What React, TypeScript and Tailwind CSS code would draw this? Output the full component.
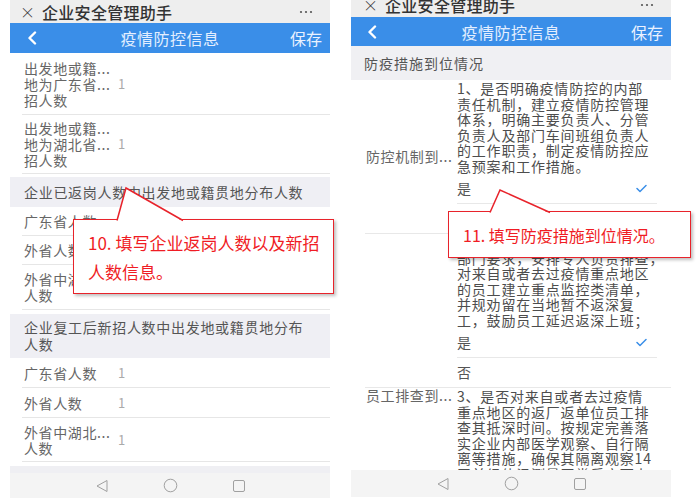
import React from "react";

const ROW = "text-[14px] leading-[16px] tracking-[0.6px] text-[#666]";

function NavIcons() {
  return (
    <div className="flex items-center justify-center gap-[54px]">
      <svg width="14" height="14" viewBox="0 0 14 14">
        <polygon points="12,1.5 12,12.5 2,7" fill="none" stroke="#a0a0a0" strokeWidth="1" />
      </svg>
      <svg width="15" height="15" viewBox="0 0 15 15">
        <circle cx="7.5" cy="7.5" r="6.3" fill="none" stroke="#a0a0a0" strokeWidth="1" />
      </svg>
      <svg width="14" height="14" viewBox="0 0 14 14">
        <rect x="1.5" y="1.5" width="11" height="11" rx="1.5" fill="none" stroke="#a0a0a0" strokeWidth="1" />
      </svg>
    </div>
  );
}

function Chevron() {
  return (
    <svg width="10" height="14" viewBox="0 0 10 14">
      <polyline points="8,1.5 2.5,7 8,12.5" fill="none" stroke="#ffffff" strokeWidth="2.4" strokeLinecap="round" strokeLinejoin="round" />
    </svg>
  );
}

function Dots() {
  return (
    <svg width="14" height="4" viewBox="0 0 14 4">
      <circle cx="2" cy="2" r="1.1" fill="#555" />
      <circle cx="7" cy="2" r="1.1" fill="#555" />
      <circle cx="12" cy="2" r="1.1" fill="#555" />
    </svg>
  );
}

function Check() {
  return (
    <svg width="11" height="9" viewBox="0 0 11 9">
      <polyline points="1,4.5 4,7.5 10,1.5" fill="none" stroke="#3a8ee8" strokeWidth="1.5" strokeLinecap="round" strokeLinejoin="round" />
    </svg>
  );
}

function LeftRow({ lines, h, value = "1" }: { lines: string[]; h: string; value?: string }) {
  return (
    <div className={`ml-[12px] pl-[2px] border-b border-[#e6e6e6] flex items-center ${h}`}>
      <div className={`w-[94px] ${ROW}`}>
        {lines.map((l, i) => (
          <div key={i} className="whitespace-nowrap">{l}</div>
        ))}
      </div>
      <span className="text-[13px] text-[#aaa]">{value}</span>
    </div>
  );
}

const TXT = "text-[14px] leading-[15.5px] tracking-[0.8px] text-[#4d4d4d] whitespace-nowrap";
const LBL = "w-[92px] pl-[1px] text-[14px] leading-[15.5px] tracking-[0.6px] text-[#666] whitespace-nowrap";

function Options() {
  return (
    <>
      <div className="h-[30px] flex items-center justify-between pr-[10px] border-b border-[#e8e8e8]">
        <span className="text-[14px] text-[#555]">是</span>
        <Check />
      </div>
      <div className="h-[29px] flex items-center">
        <span className="text-[14px] text-[#555]">否</span>
      </div>
    </>
  );
}

function RightRow({ label, lines, align }: { label: string; lines: string[]; align: string }) {
  return (
    <div className={`ml-[14px] border-b border-[#e8e8e8] flex ${align}`}>
      <div className={LBL}>{label}</div>
      <div className="w-[200px] pt-[1px]">
        {lines.map((l, i) => (
          <div key={i} className={TXT}>{l}</div>
        ))}
        <Options />
      </div>
    </div>
  );
}

function TitleBar({ pl }: { pl: string }) {
  return (
    <div className={`h-full flex items-center ${pl} pr-[17px] text-[#333]`}>
      <span className="w-[22px] text-[15px] leading-none font-light">×</span>
      <span className="text-[16px] leading-none tracking-[0.3px] font-medium">企业安全管理助手</span>
      <span className="ml-auto flex items-center"><Dots /></span>
    </div>
  );
}

export default function App() {
  return (
    <div className="relative w-[700px] h-[500px] bg-white flex overflow-hidden font-['Noto_Sans_CJK_SC',sans-serif]">
      {/* Left phone */}
      <div className="ml-[10px] w-[320px] h-[498px] flex flex-col bg-white">
        <div className="h-[23px] shrink-0 bg-[#eeeeee]">
          <TitleBar pl="pl-[10px]" />
        </div>
        <div className="h-[30px] shrink-0 bg-[#3a8ee8] grid grid-cols-[1fr_auto_1fr] items-center">
          <div className="pl-[17px] flex items-center"><Chevron /></div>
          <span className="text-[16px] leading-none tracking-[0.5px] text-[#e3eeff]">疫情防控信息</span>
          <span className="justify-self-end pr-[8px] text-[16px] leading-none text-[#eaf2ff]">保存</span>
        </div>
        <div className="flex-1 overflow-hidden flex flex-col">
          <LeftRow h="h-[62px]" lines={["出发地或籍...", "地为广东省...", "招人数"]} />
          <LeftRow h="h-[59px]" lines={["出发地或籍...", "地为湖北省...", "招人数"]} />
          <div className="mt-[3px] h-[30px] shrink-0 bg-[#efeff4] flex items-center pl-[14px] text-[14px] tracking-[0.7px] text-[#555] whitespace-nowrap">
            企业已返岗人数中出发地或籍贯地分布人数
          </div>
          <LeftRow h="h-[29px]" lines={["广东省人数"]} />
          <LeftRow h="h-[29px]" lines={["外省人数"]} />
          <LeftRow h="h-[45px]" lines={["外省中湖北...", "人数"]} />
          <div className="mt-[4px] h-[44px] shrink-0 bg-[#efeff4] flex flex-col justify-center pl-[14px] text-[14px] leading-[17px] tracking-[0.7px] text-[#555] whitespace-nowrap">
            <span>企业复工后新招人数中出发地或籍贯地分布</span>
            <span>人数</span>
          </div>
          <LeftRow h="h-[30px]" lines={["广东省人数"]} />
          <LeftRow h="h-[30px]" lines={["外省人数"]} />
          <LeftRow h="h-[44px]" lines={["外省中湖北...", "人数"]} />
        </div>
        <div className="h-[7px] shrink-0 bg-[#efeff3]" />
        <div className="h-[25px] shrink-0 bg-[#f4f4f4] flex items-center justify-center">
          <NavIcons />
        </div>
      </div>

      {/* Right phone */}
      <div className="ml-[21px] w-[320px] h-[497px] flex flex-col bg-white">
        <div className="h-[17px] shrink-0 overflow-hidden bg-[#eeeeee]">
          <div className="-mt-[8px] h-[25px]">
            <TitleBar pl="pl-[12px]" />
          </div>
        </div>
        <div className="h-[29px] shrink-0 bg-[#3a8ee8] grid grid-cols-[1fr_auto_1fr] items-center">
          <div className="pl-[16px] flex items-center"><Chevron /></div>
          <span className="text-[16px] leading-none tracking-[0.5px] text-[#e3eeff]">疫情防控信息</span>
          <span className="justify-self-end pr-[8px] text-[16px] leading-none text-[#eaf2ff]">保存</span>
        </div>
        <div className="h-[34px] shrink-0 bg-[#f0f0f3] flex items-center pl-[13px] text-[14px] tracking-[1px] text-[#555]">
          防疫措施到位情况
        </div>
        <div className="flex-1 overflow-hidden">
          <RightRow
            align="items-center"
            label="防控机制到..."
            lines={[
              "1、是否明确疫情防控的内部",
              "责任机制，建立疫情防控管理",
              "体系，明确主要负责人、分管",
              "负责人及部门车间班组负责人",
              "的工作职责，制定疫情防控应",
              "急预案和工作措施。",
            ]}
          />
          <RightRow
            align="items-center"
            label=""
            lines={[
              "2、是否按照市、区及街道相关",
              "部门要求，安排专人负责排查，",
              "对来自或者去过疫情重点地区",
              "的员工建立重点监控类清单，",
              "并规劝留在当地暂不返深复",
              "工，鼓励员工延迟返深上班；",
            ]}
          />
          <RightRow
            align="items-start"
            label="员工排查到..."
            lines={[
              "3、是否对来自或者去过疫情",
              "重点地区的返厂返单位员工排",
              "查其抵深时间。按规定完善落",
              "实企业内部医学观察、自行隔",
              "离等措施，确保其隔离观察14",
              "天并经体温测量正常后方可上",
              "岗。",
            ]}
          />
        </div>
        <div className="h-[27px] shrink-0 bg-[#f4f4f4] flex items-center justify-center">
          <NavIcons />
        </div>
      </div>

      {/* Callout 10 */}
      <div className="absolute left-[73px] top-[219px] w-[261px] h-[75px] bg-white border-[1.5px] border-[#e8232b] shadow-[2px_2px_3px_rgba(0,0,0,0.25)] pl-[14px] pt-[8px] text-[#f01c24] text-[17px] leading-[29px] whitespace-nowrap">
        <div>10. 填写企业返岗人数以及新招</div>
        <div>人数信息。</div>
      </div>
      <svg className="absolute left-[114px] top-[186px]" width="72" height="36" viewBox="0 0 72 36">
        <polygon points="3,35.5 12,2 69,35.5" fill="#ffffff" />
        <polyline points="3,34.5 12,2 69,34.5" fill="none" stroke="#e8232b" strokeWidth="1.5" />
      </svg>

      {/* Callout 11 */}
      <div className="absolute left-[448px] top-[211px] w-[243px] h-[47px] bg-white border-[1.5px] border-[#e8232b] shadow-[2px_2px_3px_rgba(0,0,0,0.25)] pl-[14px] flex items-center text-[#f01c24] text-[16px] whitespace-nowrap">
        11. 填写防疫措施到位情况。
      </div>
      <svg className="absolute left-[486px] top-[188px]" width="68" height="26" viewBox="0 0 68 26">
        <polygon points="4,25.5 14,2 64,25.5" fill="#ffffff" />
        <polyline points="4,24.5 14,2 64,24.5" fill="none" stroke="#e8232b" strokeWidth="1.5" />
      </svg>
    </div>
  );
}
